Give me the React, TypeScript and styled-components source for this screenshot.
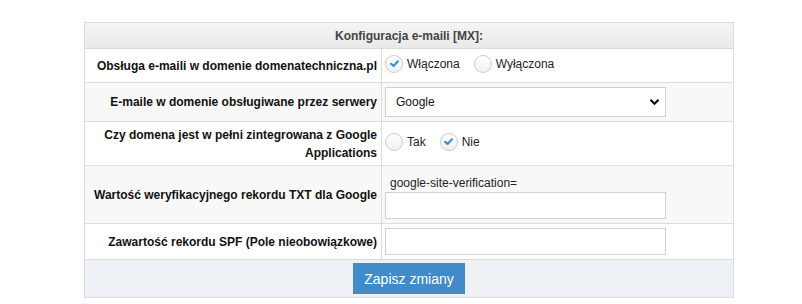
import styled, {createGlobalStyle} from "styled-components";

const GlobalStyle = createGlobalStyle`
  body {
    margin: 0;
    background: #ffffff;
    font-family: "Liberation Sans", Arial, sans-serif;
    font-size: 12px;
    color: #222;
  }
`

const Page = styled.div`
  padding: 22px 0 0 84px;
`

const Panel = styled.div`
  width: 650px;
  box-sizing: border-box;
  border: 1px solid #dcdcdc;
`

const Heading = styled.div`
  height: 25px;
  display: flex;
  align-items: center;
  justify-content: center;
  font-weight: bold;
  color: #444;
  background: linear-gradient(#f4f4f4, #e9e9e9);
  border-bottom: 1px solid #dcdcdc;
`

const Row = styled.div<{ $h: number, $shade?: boolean }>`
  display: grid;
  grid-template-columns: 297px 1fr;
  height: ${p => p.$h}px;
  background: ${p => p.$shade ? "#f8f8f8" : "#ffffff"};
  border-bottom: 1px solid #dcdcdc;
`

const Label = styled.div`
  display: flex;
  align-items: center;
  justify-content: flex-end;
  text-align: right;
  padding: 0 4px 0 8px;
  font-weight: bold;
  line-height: 18px;
  color: #111;
  border-right: 1px solid #dcdcdc;
`

const Value = styled.div<{ $bottom?: boolean }>`
  display: flex;
  flex-direction: column;
  justify-content: ${p => p.$bottom ? "flex-end" : "center"};
  padding: 0 3px ${p => p.$bottom ? 4 : 0}px 3px;
`

const RadioGroup = styled.div`
  display: flex;
  align-items: center;
  gap: 14px;
  margin-bottom: 4px;
`

const RadioOption = styled.label`
  display: flex;
  align-items: center;
  gap: 4px;
  color: #222;
`

const Circle = styled.span`
  box-sizing: border-box;
  width: 18px;
  height: 18px;
  border-radius: 50%;
  border: 1px solid #cccccc;
  background: linear-gradient(#ffffff, #f0f0f0);
  display: flex;
  align-items: center;
  justify-content: center;
`

const Select = styled.div`
  width: 281px;
  height: 30px;
  box-sizing: border-box;
  border: 1px solid #d0d0d0;
  background: #fff;
  display: flex;
  align-items: center;
  justify-content: space-between;
  padding: 0 5px 0 10px;
  color: #111;
`

const Hint = styled.div`
  padding-left: 5px;
  margin-bottom: 1px;
  line-height: 16px;
  color: #222;
`

const Input = styled.div`
  width: 281px;
  height: 27px;
  box-sizing: border-box;
  border: 1px solid #d0d0d0;
  background: #fff;
`

const Footer = styled.div`
  height: 37px;
  display: flex;
  align-items: center;
  justify-content: center;
  background: #edf1f6;
`

const Button = styled.button`
  height: 31px;
  width: 112px;
  border: none;
  background: #428bca;
  color: #fff;
  font-family: "Liberation Sans", Arial, sans-serif;
  font-size: 14px;
  padding: 0;
`

function Radio({label, checked}: { label: string, checked?: boolean }) {
    return (
        <RadioOption>
            <Circle>
                {checked &&
                    <svg width="11" height="11" viewBox="0 0 12 12">
                        <path d="M2.3 6.3 L5 8.8 L9.8 3.6" fill="none" stroke="#3b8fd6" strokeWidth="2.3"
                              strokeLinecap="round" strokeLinejoin="round"/>
                    </svg>}
            </Circle>
            {label}
        </RadioOption>
    )
}

function App() {
    return (
        <Page>
            <GlobalStyle/>
            <Panel>
                <Heading>Konfiguracja e-maili [MX]:</Heading>
                <Row $h={33}>
                    <Label>Obsługa e-maili w domenie domenatechniczna.pl</Label>
                    <Value>
                        <RadioGroup>
                            <Radio label="Włączona" checked/>
                            <Radio label="Wyłączona"/>
                        </RadioGroup>
                    </Value>
                </Row>
                <Row $h={38} $shade>
                    <Label>E-maile w domenie obsługiwane przez serwery</Label>
                    <Value>
                        <Select>
                            Google
                            <svg width="11" height="8" viewBox="0 0 11 8">
                                <path d="M1.5 1.8 L5.5 5.8 L9.5 1.8" fill="none" stroke="#111" strokeWidth="2.2"/>
                            </svg>
                        </Select>
                    </Value>
                </Row>
                <Row $h={43}>
                    <Label>Czy domena jest w pełni zintegrowana z Google Applications</Label>
                    <Value>
                        <RadioGroup>
                            <Radio label="Tak"/>
                            <Radio label="Nie" checked/>
                        </RadioGroup>
                    </Value>
                </Row>
                <Row $h={57} $shade>
                    <Label>Wartość weryfikacyjnego rekordu TXT dla Google</Label>
                    <Value $bottom>
                        <Hint>google-site-verification=</Hint>
                        <Input/>
                    </Value>
                </Row>
                <Row $h={35}>
                    <Label>Zawartość rekordu SPF (Pole nieobowiązkowe)</Label>
                    <Value>
                        <Input/>
                    </Value>
                </Row>
                <Footer>
                    <Button>Zapisz zmiany</Button>
                </Footer>
            </Panel>
        </Page>
    )
}

export default App
